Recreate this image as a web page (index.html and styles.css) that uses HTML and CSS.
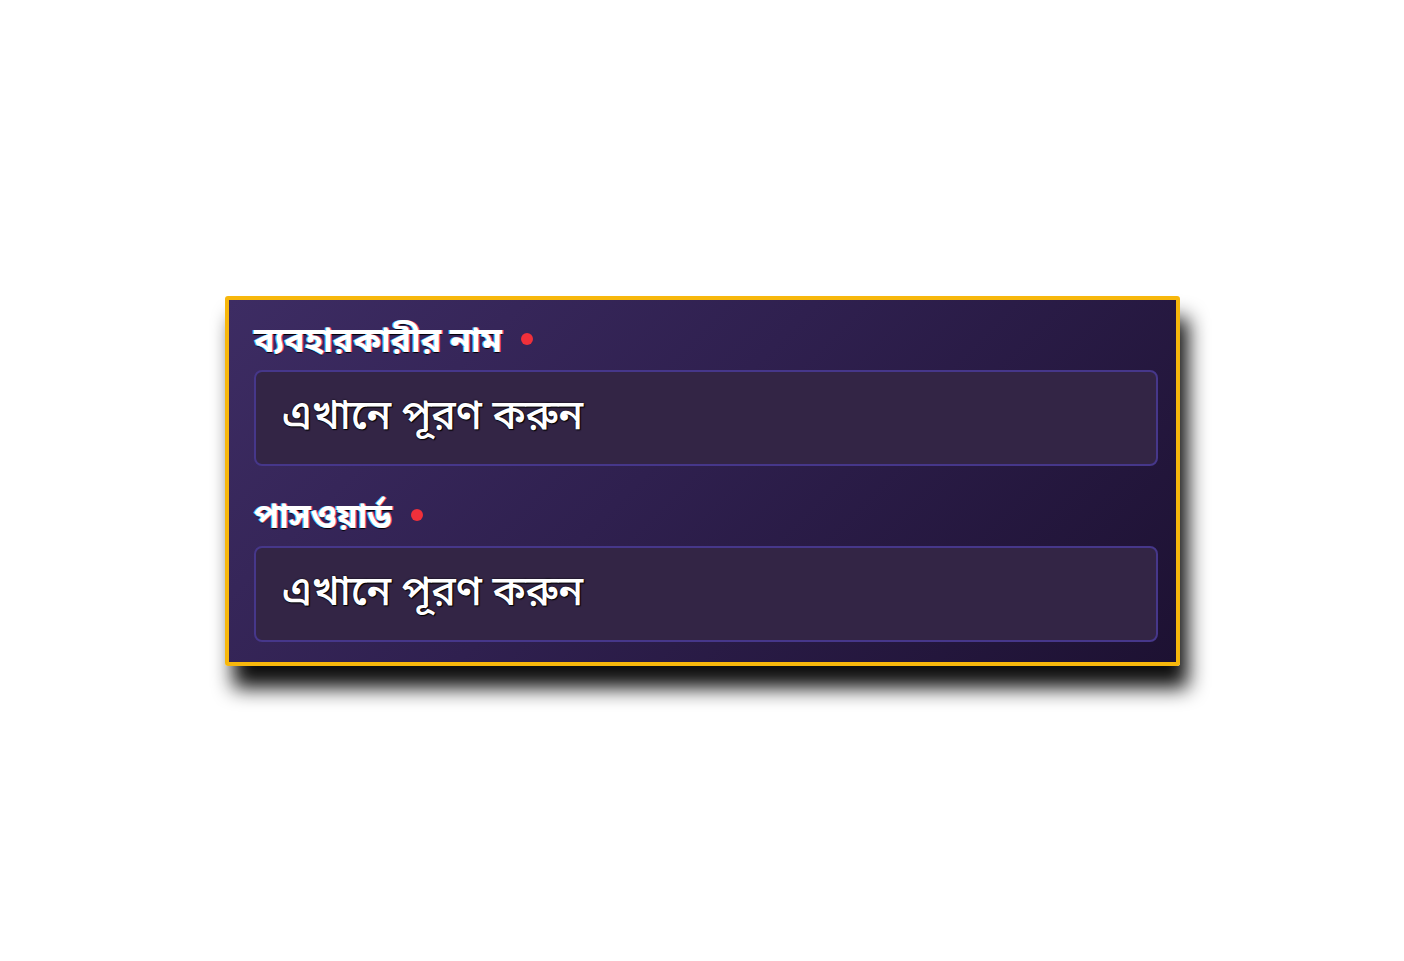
FILE: index.html
```html
<!DOCTYPE html>
<html lang="bn">
<head>
<meta charset="utf-8">
<link rel="stylesheet" href="styles.css">
</head>
<body>
<div class="stage">
  <form class="card">
    <div class="field">
      <label class="label">ব্যবহারকারীর নাম <span class="req"></span></label>
      <div class="input"><span class="ph">এখানে পূরণ করুন</span></div>
    </div>
    <div class="field">
      <label class="label">পাসওয়ার্ড <span class="req"></span></label>
      <div class="input"><span class="ph">এখানে পূরণ করুন</span></div>
    </div>
  </form>
</div>
</body>
</html>
```
FILE: styles.css
```css
html, body {
  margin: 0;
  padding: 0;
  background: #ffffff;
}
body {
  font-family: "Noto Sans Bengali", "Noto Sans", "Lohit Bengali", sans-serif;
}
.stage {
  width: 1404px;
  height: 961px;
  box-sizing: border-box;
  padding-top: 296px;
  padding-left: 225px;
}
.card {
  width: 955px;
  height: 370px;
  box-sizing: border-box;
  border: 4px solid #f7b70c;
  border-radius: 3px;
  background: linear-gradient(135deg, #3d2c63 0%, #2f204f 45%, #1d1132 100%);
  box-shadow: 8px 22px 20px rgba(0, 0, 0, 0.95);
  padding: 26px 18px 0 25px;
  display: flex;
  flex-direction: column;
  gap: 36px;
  margin: 0;
}
.field {
  display: flex;
  flex-direction: column;
  gap: 8px;
}
.label {
  color: #ffffff;
  font-weight: 700;
  font-size: 34px;
  line-height: 36px;
  text-shadow: -1px 0 0 #3fc8ff, 1px 0 0 #ff5a7a, 0 1px 1px #000;
  display: flex;
  align-items: center;
  gap: 19px;
}
.req {
  width: 12px;
  height: 12px;
  border-radius: 50%;
  background: #f0303a;
  margin-top: -10px;
}
.input {
  height: 96px;
  box-sizing: border-box;
  border: 2px solid #46378a;
  border-radius: 8px;
  background: #332545;
  display: flex;
  align-items: center;
  padding-left: 26px;
}
.ph {
  color: #ffffff;
  font-size: 41px;
  font-weight: 500;
  text-shadow: 0 0 2px #000, 1px 1px 1px #000;
}
```
